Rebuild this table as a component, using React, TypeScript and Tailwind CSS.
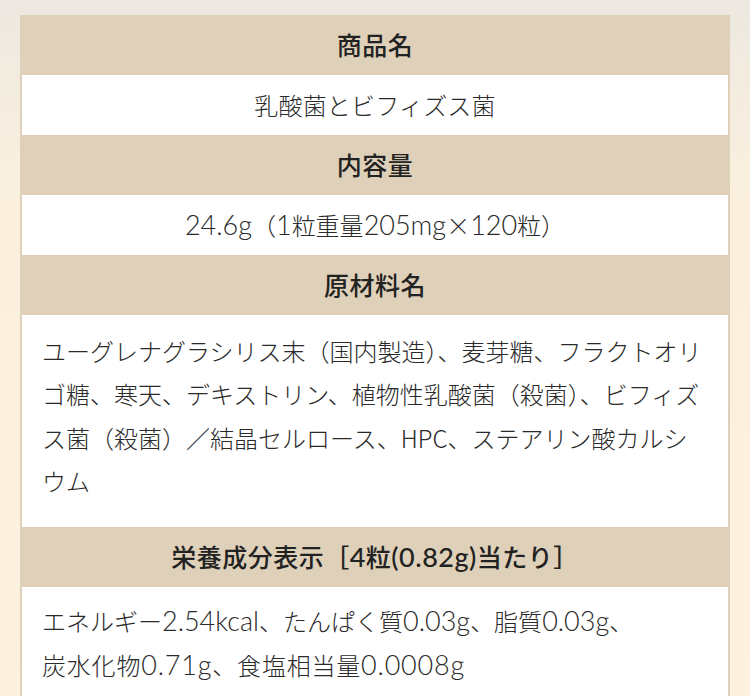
import React from 'react';

const font = { fontFamily: '"Noto Sans CJK JP", "Noto Sans", sans-serif' };

// Latin runs in the reference use a larger, geometric face
function L({ children }: { children: React.ReactNode }) {
  return <span className="font-['Lato'] text-[27px] leading-none">{children}</span>;
}

function HeadRow({ children }: { children: React.ReactNode }) {
  return (
    <div className="h-[60px] flex items-center justify-center bg-[#dfd0b9] text-[25px] font-medium tracking-[0.5px] text-[#222]">
      <span>{children}</span>
    </div>
  );
}

function CellRow({ children, className = '' }: { children: React.ReactNode; className?: string }) {
  return (
    <div className={`bg-white border-x-2 border-[#dfd0b9] text-[24px] font-light text-[#2a2a2a] ${className}`}>
      {children}
    </div>
  );
}

export default function App() {
  return (
    <div
      style={font}
      className="w-[750px] h-[696px] overflow-hidden bg-[linear-gradient(180deg,#ece8e1_0px,#f1ebe0_60px,#fbf0de_200px,#fdf1df_100%)] px-[20px] pt-[15px]"
    >
      <div className="w-[710px] flex flex-col">
        <HeadRow>商品名</HeadRow>
        <CellRow className="h-[60px] flex items-center justify-center tracking-[0.2px]">乳酸菌とビフィズス菌</CellRow>
        <HeadRow>内容量</HeadRow>
        <CellRow className="h-[60px] flex items-center justify-center">
          <span>
            <L>24.6g</L>（<L>1</L>粒重量<L>205mg</L>×<L>120</L>粒）
          </span>
        </CellRow>
        <HeadRow>原材料名</HeadRow>
        <CellRow className="pl-[20px] pr-[12px] pt-[14px] pb-[24px] leading-[43.4px]">
          ユーグレナグラシリス末（国内製造）、麦芽糖、フラクトオリゴ糖、寒天、デキストリン、植物性乳酸菌（殺菌）、ビフィズス菌（殺菌）／結晶セルロース、HPC、ステアリン酸カルシ
          <br />
          ウム
        </CellRow>
        <HeadRow>
          栄養成分表示［<L>4</L>粒<L>(0.82g)</L>当たり］
        </HeadRow>
        <CellRow className="pl-[20px] pr-[12px] pt-[12px] pb-[24px] leading-[44px]">
          エネルギー<L>2.54kcal</L>、たんぱく質<L>0.03g</L>、脂質<L>0.03g</L>、
          <br />
          <span className="tracking-[0.8px]">
            炭水化物<L>0.71g</L>、食塩相当量<L>0.0008g</L>
          </span>
        </CellRow>
      </div>
    </div>
  );
}
